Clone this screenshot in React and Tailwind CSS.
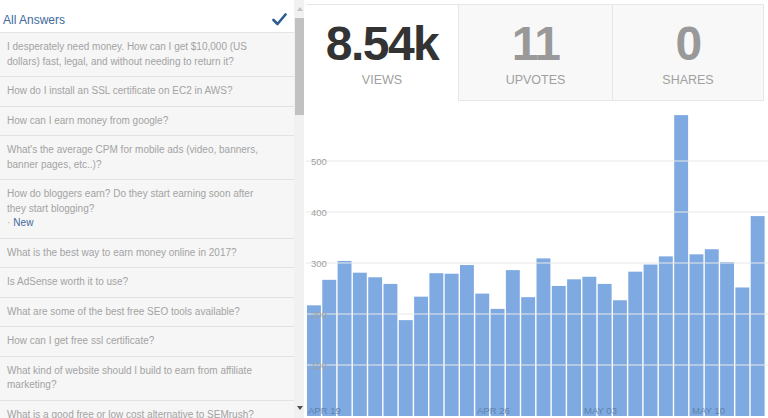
import React from 'react';

// question list shown in the left column
const questions = [
  { text: 'I desperately need money. How can I get $10,000 (US dollars) fast, legal, and without needing to return it?' },
  { text: 'How do I install an SSL certificate on EC2 in AWS?' },
  { text: 'How can I earn money from google?' },
  { text: "What's the average CPM for mobile ads (video, banners, banner pages, etc..)?" },
  { text: 'How do bloggers earn? Do they start earning soon after they start blogging?', isNew: true },
  { text: 'What is the best way to earn money online in 2017?' },
  { text: 'Is AdSense worth it to use?' },
  { text: 'What are some of the best free SEO tools available?' },
  { text: 'How can I get free ssl certificate?' },
  { text: 'What kind of website should I build to earn from affiliate marketing?' },
  { text: 'What is a good free or low cost alternative to SEMrush?' },
];

const dailyViews = [
  217, 267, 304, 281, 272, 259, 188, 234, 280, 279, 296, 240, 210, 286, 233,
  309, 255, 268, 273, 259, 227, 283, 297, 313, 590, 317, 327, 302, 252, 392,
];

const stats = [
  { value: '8.54k', label: 'VIEWS', active: true },
  { value: '11', label: 'UPVOTES' },
  { value: '0', label: 'SHARES' },
];

function ViewsChart() {
  const base = 315;
  const scale = 0.51;
  const pitch = 15.3;
  return (
    <svg width="462" height="317" className="block">
      {dailyViews.map((v, i) => (
        <rect
          key={i}
          x={1 + i * pitch}
          y={base - v * scale}
          width={pitch - 1.4}
          height={v * scale}
          fill="#7eaae1"
        />
      ))}
      {[100, 200, 300, 400, 500].map((n) => (
        <g key={n}>
          <line x1="0" x2="462" y1={base - n * scale} y2={base - n * scale} stroke="#e8e8e8" strokeWidth="1" />
          <text x="5" y={base - n * scale + 3.5} fontSize="9.5" fill="#a0a0a0" fontFamily="Liberation Sans, Arial, sans-serif">
            {n}
          </text>
        </g>
      ))}
      {[
        { x: 2, t: 'APR 19' },
        { x: 171, t: 'APR 26' },
        { x: 278, t: 'MAY 03' },
        { x: 386, t: 'MAY 10' },
      ].map((l) => (
        <text key={l.t} x={l.x} y="312.5" fontSize="9.5" fill="#5f82ad" fontFamily="Liberation Sans, Arial, sans-serif">
          {l.t}
        </text>
      ))}
    </svg>
  );
}

export default function App() {
  return (
    <div className="flex h-[418px] w-[768px] overflow-hidden bg-white font-['Liberation_Sans',Arial,sans-serif]">
      {/* Left: answers list */}
      <div className="flex w-[306px] shrink-0">
        <div className="w-[294px] shrink-0 bg-[#f6f6f6]">
          <div className="flex h-[33px] items-start justify-between border-b border-[#e4e4e4] bg-white pl-[3px] pr-[7px] pt-[13px]">
            <span className="text-[12px] leading-[14px] text-[#41699b]">All Answers</span>
            <svg width="15" height="13" viewBox="0 0 15 13">
              <path d="M1.5 7 L5.5 11 L13.5 1.5" fill="none" stroke="#2e5c8e" strokeWidth="2.6" strokeLinecap="round" strokeLinejoin="round" />
            </svg>
          </div>
          {questions.map((q, i) => (
            <div key={i} className="border-b border-[#e2e2e2] py-[7px] pl-[7px] pr-[24px] text-[10px] leading-[14.5px] text-[#a3a3a3]">
              <div>{q.text}</div>
              {q.isNew && (
                <div className="flex items-center gap-[3px]">
                  <span className="text-[#b5b5b5]">·</span>
                  <span className="text-[#41699b]">New</span>
                </div>
              )}
            </div>
          ))}
        </div>
        {/* Scrollbar */}
        <div className="flex w-[12px] flex-col bg-white">
          <div className="flex w-[10px] flex-1 flex-col bg-[#f1f1f1]">
            <div className="flex h-[18px] items-center justify-center pl-[1px]">
              <svg width="6" height="4" viewBox="0 0 6 4">
                <path d="M0 4 L3 0 L6 4 Z" fill="#c4c4c4" />
              </svg>
            </div>
            <div className="ml-[1px] h-[97px] w-[9px] bg-[#c1c1c1]" />
            <div className="flex-1" />
            <div className="flex h-[12px] items-start justify-center pl-[1px]">
              <svg width="6" height="4" viewBox="0 0 6 4">
                <path d="M0 0 L6 0 L3 4 Z" fill="#505050" />
              </svg>
            </div>
          </div>
        </div>
      </div>

      {/* Right: stats + chart */}
      <div className="flex flex-1 flex-col">
        <div className="mt-[4px] flex h-[97px] pr-[4px]">
          {stats.map((s, i) => (
            <div
              key={s.label}
              className={`flex flex-col items-center border-t border-[#e6e6e6] pt-[15px] ${
                s.active
                  ? 'w-[152px] bg-white'
                  : `bg-[#f8f8f8] border-l border-b ${i === 1 ? 'w-[154px]' : 'w-[152px] border-r'}`
              }`}
            >
              <div className={`text-[48px] font-bold leading-[48px] tracking-[-1.5px] ${s.active ? 'text-[#333333]' : 'text-[#999999]'}`}>
                {s.value}
              </div>
              <div className="mt-[4px] text-[12.5px] leading-[16px] text-[#a0a0a0]">{s.label}</div>
            </div>
          ))}
        </div>
        <ViewsChart />
      </div>
    </div>
  );
}
